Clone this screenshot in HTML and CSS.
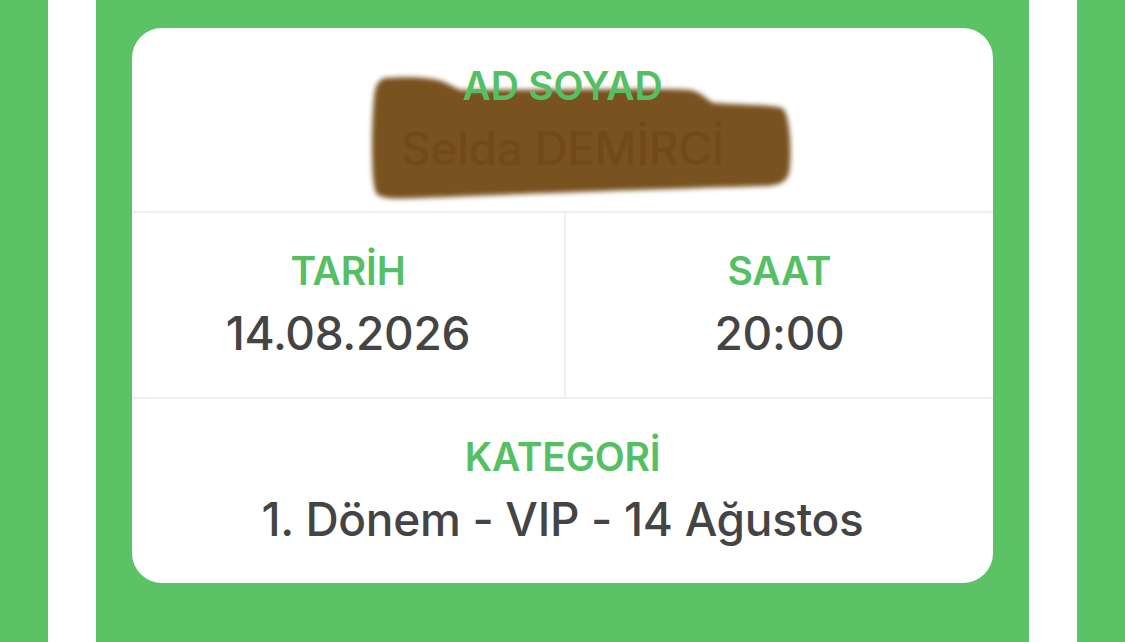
FILE: index.html
```html
<!DOCTYPE html>
<html lang="tr">
<head>
  <meta charset="UTF-8">
  <title>Bilet</title>
  <link rel="stylesheet" href="styles.css">
</head>
<body>

  <div class="edge"></div>
  <div class="stripe"></div>

  <div class="panel">
    <div class="ticket">
      <div class="field name-field">
        <div class="label">AD SOYAD</div>
        <div class="value">Selda DEMİRCİ</div>
        <svg class="scribble" width="440" height="150" viewBox="0 0 440 150">
          <defs>
            <filter id="soft" x="-10%" y="-20%" width="120%" height="140%">
              <feGaussianBlur stdDeviation="2.6" />
            </filter>
          </defs>
          <path filter="url(#soft)" fill="#744a19" fill-opacity="0.96"
                d="M21 10 C50 8 70 10 80 14 L96 22 C200 22 300 20 326 22 C338 24 342 32 350 35
                   C380 37 410 37 418 40 C428 46 428 100 424 108 C420 116 410 118 400 118
                   C300 121 150 126 56 130 C30 131 16 131 12 125 C6 110 8 50 10 30 C11 18 14 12 21 10 Z" />
        </svg>
      </div>

      <div class="split">
        <div class="field">
          <div class="label">TARİH</div>
          <div class="value">14.08.2026</div>
        </div>
        <div class="field">
          <div class="label">SAAT</div>
          <div class="value">20:00</div>
        </div>
      </div>

      <div class="field">
        <div class="label">KATEGORİ</div>
        <div class="value">1. Dönem - VIP - 14 Ağustos</div>
      </div>
    </div>
  </div>

  <div class="stripe"></div>
  <div class="edge"></div>

</body>
</html>
```

FILE: styles.css
```css
body {
  margin: 0;
  height: 642px;
  overflow: hidden;
  display: flex;
  background-color: #5bc365;
  font-family: Inter, "Noto Sans", sans-serif;
}

.edge {
  width: 48px;
  flex: none;
}

.stripe {
  width: 48px;
  flex: none;
  background: #fff;
}

.panel {
  flex: 1;
  padding: 28px 36px 0;
}

.ticket {
  background: white;
  height: 555px;
  border-radius: 30px;
  display: grid;
  grid-template-rows: 183px 188px 184px;
  overflow: hidden;
}

.split {
  display: grid;
  grid-template-columns: 432px 1fr;
  border-top: 2px solid #eeeeee;
  border-bottom: 2px solid #eeeeee;
}

.split .field + .field {
  border-left: 2px solid #eeeeee;
}

.field {
  display: flex;
  flex-direction: column;
  align-items: center;
  justify-content: center;
  position: relative;
}

.label {
  color: #55c063;
  font-size: 39px;
  font-weight: 600;
  line-height: 44px;
  letter-spacing: -0.2px;
}

.value {
  color: #444444;
  font-size: 46px;
  font-weight: 500;
  line-height: 56px;
  margin-top: 12px;
  letter-spacing: -0.3px;
}

.name-field .label {
  position: relative;
  z-index: 1;
}

.name-field .value {
  color: #4a4a4a;
}

.scribble {
  position: absolute;
  left: 232px;
  top: 40px;
}
```
